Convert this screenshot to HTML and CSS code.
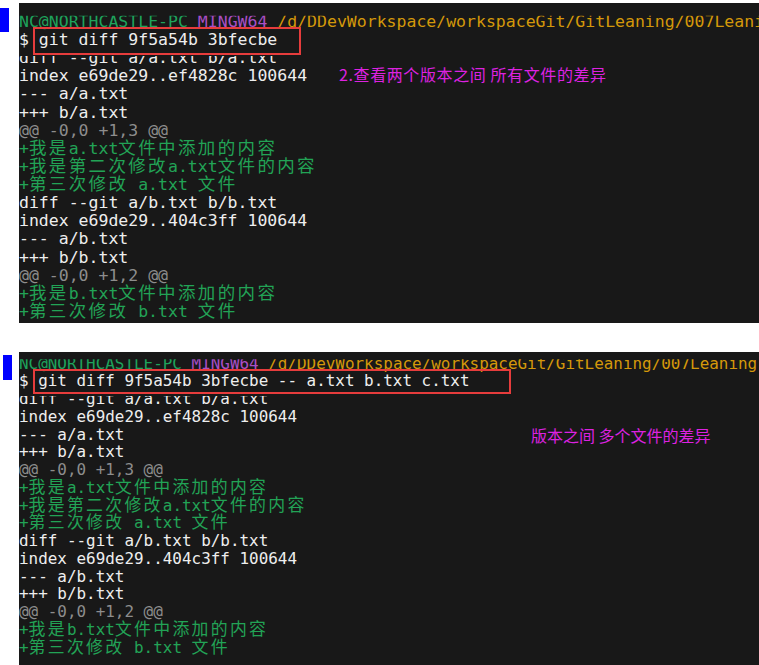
FILE: index.html
```html
<!DOCTYPE html>
<html lang="zh-CN">
<head>
<meta charset="utf-8">
<title>git diff</title>
<link rel="stylesheet" href="styles.css">
</head>
<body>
<div class="shot s1">
  <div class="mark"></div>
  <div class="term t1">
    <div class="ln cliptop"><span class="g">NC@NORTHCASTLE-PC</span> <span class="m">MINGW64</span> <span class="y">/d/DDevWorkspace/workspaceGit/GitLeaning/007Leaning</span></div>
    <div class="ln">$ git diff 9f5a54b 3bfecbe</div>
    <div class="ln clipmid">diff --git a/a.txt b/a.txt</div>
    <div class="ln">index e69de29..ef4828c 100644</div>
    <div class="ln">--- a/a.txt</div>
    <div class="ln">+++ b/a.txt</div>
    <div class="ln hunk">@@ -0,0 +1,3 @@</div>
    <div class="ln add">+<span class="cj">我是</span>a.txt<span class="cj">文件中添加的内容</span></div>
    <div class="ln add">+<span class="cj">我是第二次修改</span>a.txt<span class="cj">文件的内容</span></div>
    <div class="ln add">+<span class="cj">第三次修改</span> a.txt <span class="cj">文件</span></div>
    <div class="ln">diff --git a/b.txt b/b.txt</div>
    <div class="ln">index e69de29..404c3ff 100644</div>
    <div class="ln">--- a/b.txt</div>
    <div class="ln">+++ b/b.txt</div>
    <div class="ln hunk">@@ -0,0 +1,2 @@</div>
    <div class="ln add">+<span class="cj">我是</span>b.txt<span class="cj">文件中添加的内容</span></div>
    <div class="ln add">+<span class="cj">第三次修改</span> b.txt <span class="cj">文件</span></div>
    <div class="redbox rb1"></div>
    <div class="note n1">2.查看两个版本之间 所有文件的差异</div>
  </div>
</div>
<div class="shot s2">
  <div class="mark"></div>
  <div class="term t2">
    <div class="ln cliptop"><span class="g">NC@NORTHCASTLE-PC</span> <span class="m">MINGW64</span> <span class="y">/d/DDevWorkspace/workspaceGit/GitLeaning/007Leaning</span></div>
    <div class="ln">$ git diff 9f5a54b 3bfecbe -- a.txt b.txt c.txt</div>
    <div class="ln clipmid">diff --git a/a.txt b/a.txt</div>
    <div class="ln">index e69de29..ef4828c 100644</div>
    <div class="ln">--- a/a.txt</div>
    <div class="ln">+++ b/a.txt</div>
    <div class="ln hunk">@@ -0,0 +1,3 @@</div>
    <div class="ln add">+<span class="cj">我是</span>a.txt<span class="cj">文件中添加的内容</span></div>
    <div class="ln add">+<span class="cj">我是第二次修改</span>a.txt<span class="cj">文件的内容</span></div>
    <div class="ln add">+<span class="cj">第三次修改</span> a.txt <span class="cj">文件</span></div>
    <div class="ln">diff --git a/b.txt b/b.txt</div>
    <div class="ln">index e69de29..404c3ff 100644</div>
    <div class="ln">--- a/b.txt</div>
    <div class="ln">+++ b/b.txt</div>
    <div class="ln hunk">@@ -0,0 +1,2 @@</div>
    <div class="ln add">+<span class="cj">我是</span>b.txt<span class="cj">文件中添加的内容</span></div>
    <div class="ln add">+<span class="cj">第三次修改</span> b.txt <span class="cj">文件</span></div>
    <div class="redbox rb2"></div>
    <div class="note n2">版本之间 多个文件的差异</div>
  </div>
</div>
</body>
</html>
```
FILE: styles.css
```css
html, body {
  margin: 0;
  padding: 0;
  background: #ffffff;
}
body {
  width: 759px;
  height: 665px;
  overflow: hidden;
}
.shot {
  display: flex;
  align-items: flex-start;
}
.s1 { margin-top: 3px; }
.s2 { margin-top: 29px; }

.mark {
  flex: none;
  width: 9px;
  background: #0000ff;
}
.s1 .mark {
  margin-top: 5px;
  height: 24px;
  margin-right: 10px;
}
.s2 .mark {
  margin-left: 3px;
  margin-top: 3px;
  height: 25px;
  margin-right: 7px;
}

.term {
  position: relative;
  flex: 1;
  box-sizing: border-box;
  height: 320px;
  background: #181818;
  overflow: hidden;
  color: #eeeeee;
  font-family: "DejaVu Sans Mono", "Liberation Mono", monospace;
}
.t1 {
  font-size: 16.5px;
  --lh: 18.15px;
  padding-top: 9.8px;
}
.t2 {
  font-size: 15.93px;
  --lh: 17.75px;
  padding-top: 2.56px;
}
.ln {
  height: var(--lh);
  line-height: var(--lh);
  white-space: pre;
}
.t1 .cliptop { clip-path: inset(3px 0 0 0); }
.t1 .clipmid { clip-path: inset(6.9px 0 0 0); }
.t2 .cliptop { clip-path: inset(4.7px 0 0 0); }
.t2 .clipmid { clip-path: inset(5.9px 0 0 0); }

.g { color: #1ea35c; }
.m { color: #a94fc6; }
.y { color: #d4980a; }
.hunk { color: #8d8d8d; }
.add { color: #22a356; }

.cj {
  font-family: "Noto Sans CJK SC", sans-serif;
  font-size: 1.06em;
  letter-spacing: 0.13594em;
  line-height: 0;
}

.redbox {
  position: absolute;
  box-sizing: border-box;
  border: 2px solid #e63c3c;
  left: 14px;
}
.rb1 { top: 24px; width: 268px; height: 28px; }
.rb2 { top: 17px; width: 478px; height: 25px; }

.note {
  position: absolute;
  font-family: "Noto Sans CJK SC", sans-serif;
  color: #dd22e0;
  line-height: 1;
  white-space: nowrap;
}
.n1 { left: 320px; top: 63.4px; font-size: 16px; letter-spacing: 0.6px; }
.n2 { left: 512px; top: 74.5px; font-size: 16px; }
```
